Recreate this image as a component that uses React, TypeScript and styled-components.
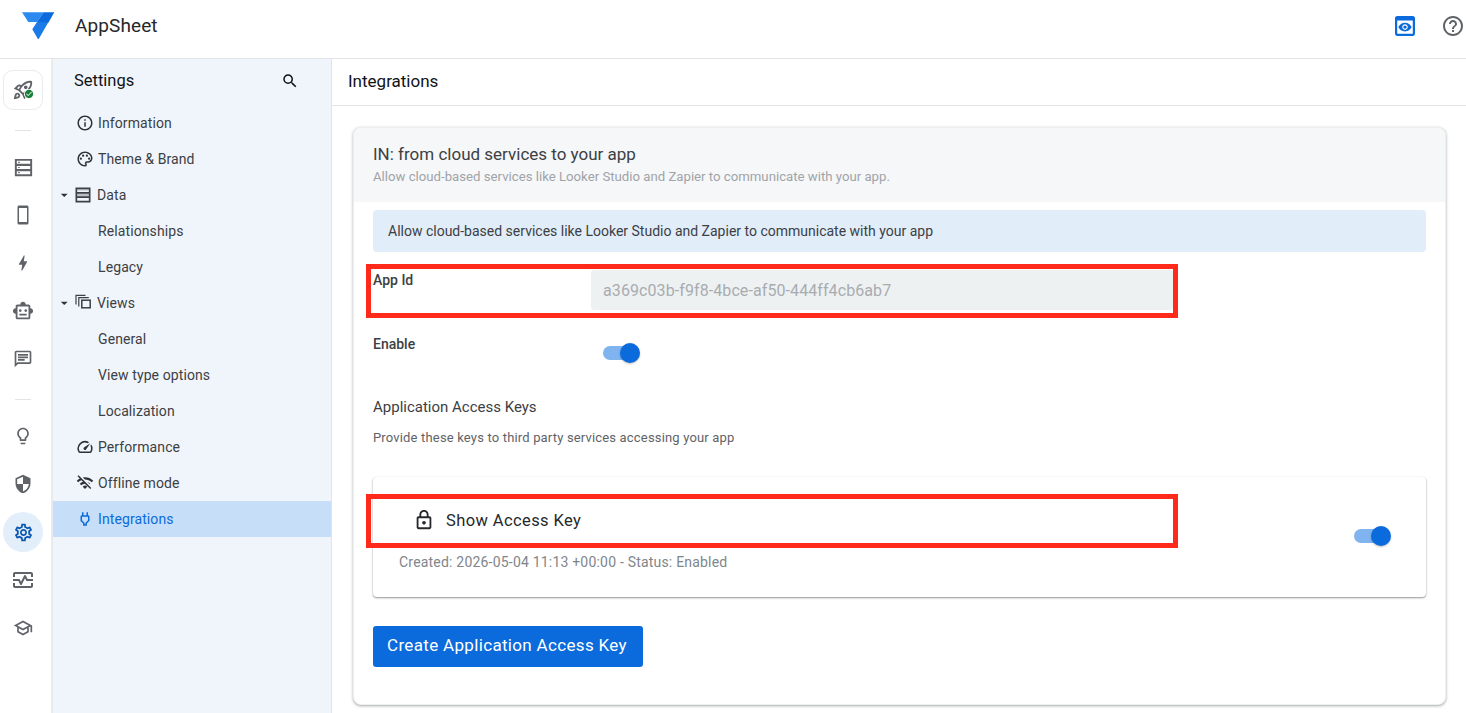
import { ReactNode } from 'react';
import styled, { createGlobalStyle } from 'styled-components';
import {
  MdArrowDropDown,
  MdBolt,
  MdCheckCircle,
  MdOutlineChat,
  MdOutlineHelpOutline,
  MdOutlineInfo,
  MdOutlineLightbulb,
  MdOutlineLock,
  MdOutlineMonitorHeart,
  MdOutlinePalette,
  MdOutlinePower,
  MdOutlineRocketLaunch,
  MdOutlineSchool,
  MdOutlineSettings,
  MdOutlineSmartToy,
  MdOutlineSpeed,
  MdOutlineWifiOff,
  MdSearch,
  MdSecurity,
} from 'react-icons/md';

const GlobalStyle = createGlobalStyle`
  html, body {
    margin: 0;
    height: 100%;
    overflow: hidden;
    background: #fff;
  }
  body {
    font-family: Roboto, "Liberation Sans", sans-serif;
    color: #202124;
  }
  * {
    box-sizing: border-box;
  }
`;

const DataIcon = () => (
  <svg width="23" height="23" viewBox="0 0 24 24" fill="currentColor">
    <path d="M3 3h18v18H3V3zm2 2v3.200h14V5H5zm0 5.400v3.200h14v-3.200H5zm0 5.400V19h14v-3.200H5z" />
    <path d="M6.500 6h1.600v1.200H6.500zM6.500 11.400h1.600v1.200H6.500zM6.500 16.800h1.600V18H6.500z" />
  </svg>
);

const DataNavIcon = () => (
  <svg width="20" height="20" viewBox="0 0 24 24" fill="currentColor">
    <path d="M3 3h18v18H3V3zm2 2v3.500h14V5H5zm0 5.500v3h14v-3H5zm0 5v3.500h14v-3.500H5z" />
    <path d="M5 10.500h14v3H5zM5 5h14v1.500H5z" opacity="0.3" />
  </svg>
);

const ViewsIcon = () => (
  <svg width="20" height="20" viewBox="0 0 20 20" fill="none" stroke="currentColor">
    <path d="M3 11.500V2.300h9.500" strokeWidth="1.200" />
    <path d="M5.800 13.500V4.600h10" strokeWidth="1.200" />
    <rect x="8.800" y="7.200" width="8.400" height="7.600" strokeWidth="1.500" />
  </svg>
);

const PhoneIcon = () => (
  <svg width="24" height="24" viewBox="0 0 24 24" fill="currentColor">
    <path
      fillRule="evenodd"
      d="M8 2.500h8c.9 0 1.500.6 1.500 1.500v16c0 .9-.6 1.500-1.500 1.500H8c-.9 0-1.500-.6-1.500-1.500V4c0-.9.6-1.500 1.500-1.500zM8 5v14h8V5H8z"
    />
  </svg>
);

const PreviewIcon = () => (
  <svg width="20" height="20" viewBox="3 3 18 18" fill="#0b6bdc">
    <path d="M19 3H5c-1.110 0-2 .9-2 2v14c0 1.100.89 2 2 2h14c1.100 0 2-.9 2-2V5c0-1.100-.89-2-2-2zm0 16H5V7h14v12zm-5.500-6c0 .83-.67 1.500-1.500 1.500s-1.500-.67-1.500-1.500.67-1.500 1.500-1.500 1.500.67 1.500 1.500zM12 9c-2.730 0-5.060 1.660-6 4 .94 2.340 3.270 4 6 4s5.060-1.660 6-4c-.94-2.340-3.270-4-6-4zm0 6.500c-1.380 0-2.500-1.120-2.500-2.500s1.120-2.500 2.500-2.500 2.500 1.120 2.500 2.500-1.120 2.500-2.500 2.500z" />
  </svg>
);

const Logo = () => (
  <svg width="33" height="28" viewBox="0 0 33 28">
    <path d="M15 10h11.500L17 26.500c-.4.7-1 .7-1.400 0l-5.300-9.200z" fill="#1a7be8" />
    <path d="M0 .3h21.500L15 10H6.300z" fill="#2b8af0" />
    <path d="M21.500.3h10.800L26.500 10.500 15 10z" fill="#0b6bdc" />
  </svg>
);

const Page = styled.div`
  display: flex;
  flex-direction: column;
  width: 1466px;
  height: 713px;
  overflow: hidden;
`;

const TopBar = styled.header`
  display: flex;
  align-items: center;
  flex: 0 0 59px;
  padding: 0 1px 7px 22px;
  border-bottom: 1px solid #e3e4e6;
`;

const LogoWrap = styled.div`
  display: flex;
  width: 53px;
  margin-top: 1px;
`;

const Brand = styled.div`
  flex: 1;
  font-size: 19px;
  font-weight: 400;
  letter-spacing: 0.1px;
  color: #26282b;
`;

const TopActions = styled.div`
  display: flex;
  align-items: center;
  gap: 26px;
  color: #5f6368;
`;

const Body = styled.div`
  display: flex;
  flex: 1;
  min-height: 0;
`;

const Rail = styled.nav`
  display: flex;
  flex-direction: column;
  align-items: center;
  flex: 0 0 53px;
  padding: 11px 8px 0 3px;
  border-right: 2px solid #e8eaed;
`;

const RocketTile = styled.div`
  position: relative;
  display: flex;
  align-items: center;
  justify-content: center;
  width: 40px;
  height: 40px;
  color: #5f6368;
  background: #fff;
  border: 1px solid #e8eaed;
  border-radius: 10px;
`;

const RocketBadge = styled.span`
  position: absolute;
  left: 20px;
  top: 18px;
  display: flex;
  color: #188038;
  background: #fff;
  border-radius: 50%;
`;

const RailDivider = styled.div`
  width: 16px;
  height: 1px;
  margin: 20px 0 0;
  background: #e3e4e6;
`;

const RailItem = styled.div<{ $active?: boolean; $gap?: number }>`
  display: flex;
  align-items: center;
  justify-content: center;
  width: 40px;
  height: 40px;
  margin-top: ${(p) => p.$gap ?? 8}px;
  color: ${(p) => (p.$active ? '#0b57b0' : '#5f6368')};
  background: ${(p) => (p.$active ? '#e3eefb' : 'transparent')};
  border-radius: 50%;
`;

const Sidebar = styled.aside`
  display: flex;
  flex-direction: column;
  flex: 0 0 279px;
  background: #f0f5fc;
  border-right: 1px solid #e3e4e6;
`;

const SidebarHead = styled.div`
  display: flex;
  align-items: center;
  justify-content: space-between;
  height: 46px;
  padding: 0 32px 3px 21px;
  font-size: 16.500px;
  font-weight: 400;
  color: #111315;
`;

const NavList = styled.div`
  display: flex;
  flex-direction: column;
`;

const NavRow = styled.div<{ $active?: boolean; $level?: 'top' | 'group' | 'sub' }>`
  display: flex;
  align-items: center;
  height: 36px;
  padding-left: ${(p) => (p.$level === 'group' ? 3 : p.$level === 'sub' ? 45 : 23)}px;
  font-size: 14px;
  letter-spacing: 0.1px;
  color: ${(p) => (p.$active ? '#0b6bdc' : '#3c4043')};
  background: ${(p) => (p.$active ? '#c7def8' : 'transparent')};
`;

const NavIcon = styled.span<{ $active?: boolean }>`
  display: flex;
  width: 22px;
  color: ${(p) => (p.$active ? '#0b6bdc' : '#2f3235')};
`;

const Caret = styled.span`
  display: flex;
  width: 16.500px;
  color: #2f3235;
`;

const GroupIcon = styled.span`
  display: flex;
  width: 24.500px;
  color: #3c4043;
`;

const Main = styled.main`
  display: flex;
  flex-direction: column;
  flex: 1;
  min-width: 0;
`;

const MainHead = styled.div`
  display: flex;
  align-items: center;
  flex: 0 0 47px;
  padding: 0 16px 2px;
  font-size: 17px;
  font-weight: 400;
  color: #111315;
  border-bottom: 1px solid #e3e4e6;
`;

const MainScroll = styled.div`
  flex: 1;
  padding: 21px 20px 0 21px;
`;

const Card = styled.section`
  height: 578px;
  overflow: hidden;
  background: #fff;
  border: 1px solid #eceef0;
  border-radius: 8px;
  box-shadow: 0 1px 3px rgba(60, 64, 67, 0.45);
`;

const CardHead = styled.div`
  height: 74px;
  padding: 16px 19px 0;
  background: #f6f7f9;
`;

const CardTitle = styled.h2`
  margin: 0;
  font-size: 17px;
  font-weight: 400;
  line-height: 20px;
  color: #3c4043;
`;

const CardSub = styled.p`
  margin: 5px 0 0;
  font-size: 13.200px;
  line-height: 16px;
  color: #a0a4a8;
`;

const CardBody = styled.div`
  padding: 8px 19px 0;
`;

const Notice = styled.div`
  display: flex;
  align-items: center;
  height: 42px;
  padding: 0 15px;
  font-size: 14px;
  color: #3c4043;
  background: #e2edfa;
  border-radius: 4px;
`;

const Marked = styled.div`
  border: 5px solid #ff2a1a;
`;

const IdRow = styled(Marked)`
  display: flex;
  width: 812px;
  height: 54px;
  margin: 12px 0 0 -7px;
  padding-left: 2px;
`;

const FieldLabel = styled.div`
  width: 218px;
  padding-top: 2px;
  font-size: 14px;
  font-weight: 500;
  line-height: 18px;
  color: #3c4043;
`;

const IdInput = styled.div`
  display: flex;
  align-items: center;
  width: 582px;
  height: 40px;
  margin-top: 1px;
  padding: 0 12px;
  font-size: 16px;
  letter-spacing: 0.09px;
  color: #a8acb0;
  background: #eef1f2;
  border-radius: 3px;
`;

const EnableRow = styled.div`
  display: flex;
  align-items: flex-start;
  margin-top: 17px;
  height: 48px;
`;

const EnableLabel = styled(FieldLabel)`
  padding-top: 0;
  width: 230px;
`;

const Toggle = styled.span`
  position: relative;
  display: block;
  flex: none;
  width: 37px;
  height: 20px;
`;

const ToggleTrack = styled.span`
  position: absolute;
  top: 3px;
  left: 0;
  width: 34px;
  height: 14px;
  background: #7fb4f0;
  border-radius: 7px;
`;

const ToggleKnob = styled.span`
  position: absolute;
  top: 0;
  right: 0;
  width: 20px;
  height: 20px;
  background: #0b6bdc;
  border-radius: 50%;
  box-shadow: 0 1px 2px rgba(0, 0, 0, 0.25);
`;

const EnableToggle = styled.div`
  margin-top: 8px;
`;

const KeysTitle = styled.h3`
  margin: 14px 0 0;
  font-size: 15px;
  font-weight: 400;
  line-height: 20px;
  color: #3c4043;
`;

const KeysHint = styled.p`
  margin: 13px 0 0;
  font-size: 13px;
  line-height: 16px;
  letter-spacing: 0.17px;
  color: #5f6368;
`;

const KeyCard = styled.div`
  position: relative;
  height: 120px;
  margin-top: 31px;
  background: #fff;
  border-radius: 4px;
  box-shadow: 0 1px 2px rgba(60, 64, 67, 0.55), 0 0 1px rgba(60, 64, 67, 0.12);
`;

const KeyRow = styled(Marked)`
  position: absolute;
  top: 17px;
  left: -7px;
  display: flex;
  align-items: center;
  gap: 11px;
  width: 812px;
  height: 54px;
  padding: 0 0 2px 42px;
  font-size: 16.500px;
  letter-spacing: 0.4px;
  color: #26282b;
`;

const KeyToggle = styled.div`
  position: absolute;
  top: 49px;
  right: 35px;
`;

const KeyMeta = styled.div`
  position: absolute;
  top: 77px;
  left: 26px;
  font-size: 14px;
  letter-spacing: 0.2px;
  color: #80868b;
`;

const PrimaryButton = styled.button`
  display: block;
  width: 270px;
  height: 41px;
  margin-top: 29px;
  padding: 0 2px 3px 0;
  font-family: inherit;
  font-size: 17px;
  letter-spacing: 0.33px;
  color: #fff;
  background: #0b6bdc;
  border: 0;
  border-radius: 3px;
`;

const Switch = () => (
  <Toggle>
    <ToggleTrack />
    <ToggleKnob />
  </Toggle>
);

type NavEntry = { label: string; icon?: ReactNode; level?: 'top' | 'group' | 'sub'; active?: boolean };

const navEntries: NavEntry[] = [
  { label: 'Information', icon: <MdOutlineInfo size={18} /> },
  { label: 'Theme & Brand', icon: <MdOutlinePalette size={18} /> },
  { label: 'Data', icon: <DataNavIcon />, level: 'group' },
  { label: 'Relationships', level: 'sub' },
  { label: 'Legacy', level: 'sub' },
  { label: 'Views', icon: <ViewsIcon />, level: 'group' },
  { label: 'General', level: 'sub' },
  { label: 'View type options', level: 'sub' },
  { label: 'Localization', level: 'sub' },
  { label: 'Performance', icon: <MdOutlineSpeed size={18} /> },
  { label: 'Offline mode', icon: <MdOutlineWifiOff size={18} /> },
  { label: 'Integrations', icon: <MdOutlinePower size={18} />, active: true },
];

export default function App() {
  return (
    <Page>
      <GlobalStyle />
      <TopBar>
        <LogoWrap>
          <Logo />
        </LogoWrap>
        <Brand>AppSheet</Brand>
        <TopActions>
          <PreviewIcon />
          <MdOutlineHelpOutline size={24} />
        </TopActions>
      </TopBar>
      <Body>
        <Rail>
          <RocketTile>
            <MdOutlineRocketLaunch size={22} />
            <RocketBadge>
              <MdCheckCircle size={10} />
            </RocketBadge>
          </RocketTile>
          <RailDivider />
          <RailItem $gap={16}>
            <DataIcon />
          </RailItem>
          <RailItem>
            <PhoneIcon />
          </RailItem>
          <RailItem>
            <MdBolt size={20} />
          </RailItem>
          <RailItem>
            <MdOutlineSmartToy size={22} />
          </RailItem>
          <RailItem>
            <MdOutlineChat size={20} />
          </RailItem>
          <RailDivider />
          <RailItem $gap={16}>
            <MdOutlineLightbulb size={20} />
          </RailItem>
          <RailItem>
            <MdSecurity size={20} />
          </RailItem>
          <RailItem $active>
            <MdOutlineSettings size={21} />
          </RailItem>
          <RailItem>
            <MdOutlineMonitorHeart size={24} />
          </RailItem>
          <RailItem>
            <MdOutlineSchool size={20} />
          </RailItem>
        </Rail>
        <Sidebar>
          <SidebarHead>
            Settings
            <MdSearch size={18} />
          </SidebarHead>
          <NavList>
            {navEntries.map((entry) => (
              <NavRow key={entry.label} $level={entry.level} $active={entry.active}>
                {entry.level === 'group' ? (
                  <>
                    <Caret>
                      <MdArrowDropDown size={18} />
                    </Caret>
                    <GroupIcon>{entry.icon}</GroupIcon>
                  </>
                ) : (
                  entry.icon && <NavIcon $active={entry.active}>{entry.icon}</NavIcon>
                )}
                {entry.label}
              </NavRow>
            ))}
          </NavList>
        </Sidebar>
        <Main>
          <MainHead>Integrations</MainHead>
          <MainScroll>
            <Card>
              <CardHead>
                <CardTitle>IN: from cloud services to your app</CardTitle>
                <CardSub>Allow cloud-based services like Looker Studio and Zapier to communicate with your app.</CardSub>
              </CardHead>
              <CardBody>
                <Notice>Allow cloud-based services like Looker Studio and Zapier to communicate with your app</Notice>
                <IdRow>
                  <FieldLabel>App Id</FieldLabel>
                  <IdInput>a369c03b-f9f8-4bce-af50-444ff4cb6ab7</IdInput>
                </IdRow>
                <EnableRow>
                  <EnableLabel>Enable</EnableLabel>
                  <EnableToggle>
                    <Switch />
                  </EnableToggle>
                </EnableRow>
                <KeysTitle>Application Access Keys</KeysTitle>
                <KeysHint>Provide these keys to third party services accessing your app</KeysHint>
                <KeyCard>
                  <KeyRow>
                    <MdOutlineLock size={22} />
                    Show Access Key
                  </KeyRow>
                  <KeyMeta>Created: 2026-05-04 11:13 +00:00 - Status: Enabled</KeyMeta>
                  <KeyToggle>
                    <Switch />
                  </KeyToggle>
                </KeyCard>
                <PrimaryButton>Create Application Access Key</PrimaryButton>
              </CardBody>
            </Card>
          </MainScroll>
        </Main>
      </Body>
    </Page>
  );
}
